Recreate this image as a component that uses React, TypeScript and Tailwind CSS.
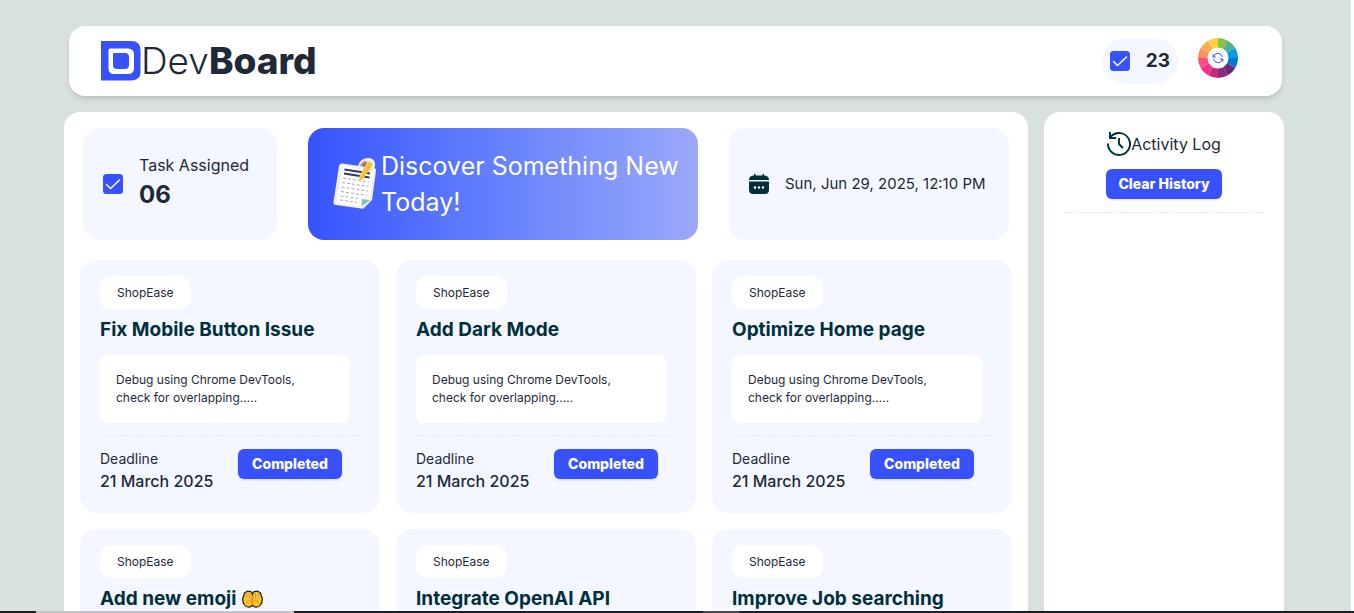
import React from "react";

const wheelColors = [
  "#8bc34a", "#4db296", "#039be5", "#0277cd", "#6a2a78", "#8e2a7c",
  "#c62b80", "#ff2e88", "#ff4f7e", "#ff8f5e", "#ffb04c", "#ffd23a",
];

function wedge(index: number) {
  const a = ((index * 30 - 90) * Math.PI) / 180;
  const b = (((index + 1) * 30 - 90) * Math.PI) / 180;
  return `M20 20L${20 + 20 * Math.cos(a)} ${20 + 20 * Math.sin(a)}A20 20 0 0 1 ${20 + 20 * Math.cos(b)} ${20 + 20 * Math.sin(b)}Z`;
}

function LogoIcon() {
  return (
    <svg className="size-10 shrink-0" viewBox="0 0 40 40" aria-hidden="true">
      <path d="M0 0H30Q39.500 0 39.500 9V31Q39.500 39.500 30 39.500H0Z" fill="#3752fd" />
      <path d="M9 7.500H27Q33 7.500 33 13.500V27Q33 33 27 33H13Q7.500 33 7.500 27V9Q7.500 7.500 9 7.500Z" fill="#fff" />
      <path d="M13 12H24Q28 12 28 16V24Q28 28 24 28H16Q12 28 12 24V13Q12 12 13 12Z" fill="#3752fd" />
    </svg>
  );
}

function CheckIcon() {
  return (
    <svg className="size-5 shrink-0" viewBox="0 0 20 20" aria-hidden="true">
      <rect width="20" height="20" rx="3.500" fill="#3752fd" />
      <path d="M3.500 10.500L7.500 14.500L16.500 6" fill="none" stroke="#fff" strokeWidth="1.500" strokeLinecap="round" strokeLinejoin="round" />
    </svg>
  );
}

function ColorWheel() {
  return (
    <svg className="size-10" viewBox="0 0 40 40" aria-hidden="true">
      {wheelColors.map((color, i) => (
        <path key={color} d={wedge(i)} fill={color} />
      ))}
      <circle cx="20" cy="20" r="10.500" fill="#fff" />
      <g fill="none" stroke="#3752fd" strokeWidth="1" strokeLinecap="round" strokeLinejoin="round">
        <path d="M24.300 18.500A4.500 4.500 0 0 0 16.200 17.500L15.200 19" />
        <path d="M15.200 16.500V19H17.500" />
        <path d="M15.700 21.500A4.500 4.500 0 0 0 23.800 22.500L24.800 21" />
        <path d="M24.800 23.500V21H22.500" />
      </g>
    </svg>
  );
}

function NotesIcon() {
  return (
    <svg className="h-[52px] w-12 shrink-0" viewBox="0 0 48 52" aria-hidden="true">
      <path d="M9 5.500L41 10Q43.500 10.500 43 13L39 42L31 50Q30 51 28 50.500L3 47Q0 46.500 .5 44L6 8Q6.500 5.200 9 5.500Z" fill="#f3eee0" />
      <path d="M9.500 7.500L41 12L37 41.500L29 48.500L3 45Z" fill="#fff" />
      <path d="M29 41L37 42L28.500 48.500Z" fill="#78c5c9" />
      <path d="M11.500 11.500L37 15.500M11 15.500L36.500 19.500" stroke="#33386b" strokeWidth="2" />
      <path d="M10 20L36 24M9 24.500L35.500 28.500M8.500 29L35 33M8 33.500L34 37.500M7.500 38L25 40.500M7 42L24 44.500" stroke="#a3a7ca" strokeWidth="1" strokeDasharray="3 2" />
      <path d="M27 9Q28 2.500 35 2Q41 2 40 8L38 14" fill="none" stroke="#f3eee0" strokeWidth="4" />
      <path d="M28 8Q30 3.500 33 4" fill="none" stroke="#e78345" strokeWidth="2" />
      <path d="M34 4Q37 2.500 39 5Q40 6.500 38.500 9L30 21L26 23.500L26.500 18Z" fill="#f8c743" />
      <path d="M38 6L28 21" stroke="#e8ac2d" strokeWidth="1" />
    </svg>
  );
}

function CalendarIcon() {
  return (
    <svg className="size-5 shrink-0" viewBox="0 0 20 20" aria-hidden="true">
      <path d="M5 0H6.500V1.500H13.500V0H15V1.500Q20 1.500 20 6H0Q0 1.500 5 1.500Z" fill="#00303c" />
      <path d="M0 7.500H20V15.500Q20 20 16 20H4Q0 20 0 15.500Z" fill="#00303c" />
      <circle cx="6" cy="13.500" r="1.200" fill="#fff" />
      <circle cx="10" cy="13.500" r="1.200" fill="#fff" />
      <circle cx="14" cy="13.500" r="1.200" fill="#fff" />
    </svg>
  );
}

function HistoryIcon() {
  return (
    <svg className="size-6 shrink-0" viewBox="0 0 24 24" fill="none" stroke="#00303c" strokeWidth="1.900" aria-hidden="true">
      <path d="M1 11.500A11 11 0 1 0 4.200 4.200L3 5.500" />
      <path d="M3 0V6H9" />
      <path d="M12 6V12L16 16" />
    </svg>
  );
}

function PalmsIcon() {
  return (
    <svg className="ml-1.5 inline-block h-[18px] w-[21px] align-[-3px]" viewBox="0 0 21 18" role="img" aria-label="Palms up together">
      <g fill="#fcc12f" stroke="#1c1a12" strokeWidth="1.200" strokeLinejoin="round">
        <path d="M10.500 4Q9.500 1 7.500 1.500Q5.500 .3 4.200 2Q2 2 2 5L.8 8Q.3 12 2.500 15Q4.500 17.500 8 17L10.500 15.500Z" />
        <path d="M10.500 4Q11.500 1 13.500 1.500Q15.500 .3 16.800 2Q19 2 19 5L20.200 8Q20.700 12 18.500 15Q16.500 17.500 13 17L10.500 15.500Z" />
      </g>
      <path d="M10.500 6V15" stroke="#fcc12f" strokeWidth="1.400" />
      <path d="M4.500 3V8M7.500 2.500V8M13.500 2.500V8M16.500 3V8M10.500 5V15M4 13.500Q4.500 10 8.500 10.500M17 13.500Q16.500 10 12.500 10.500" fill="none" stroke="#dd951c" strokeWidth=".8" />
    </svg>
  );
}

const tasks = [
  { title: "Fix Mobile Button Issue" },
  { title: "Add Dark Mode" },
  { title: "Optimize Home page" },
  { title: "Add new emoji", emoji: true },
  { title: "Integrate OpenAI API" },
  { title: "Improve Job searching" },
];

const buttonClass =
  "h-[30px] rounded-md bg-[#3752fd] text-sm font-extrabold text-white shadow-sm";

function TaskCard({ title, emoji }: { title: string; emoji?: boolean }) {
  return (
    <article className="rounded-2xl bg-[#f4f7ff] px-5 pt-4 pb-5">
      <span className="inline-block rounded-xl bg-white px-[17px] py-2 align-top text-xs leading-[17px]">ShopEase</span>
      <h2 className="mt-[7px] text-[19px] leading-7 font-bold whitespace-nowrap text-[#00303c]">
        {title}
        {emoji && <PalmsIcon />}
      </h2>
      <p className="mt-[11px] mr-2.5 rounded-lg bg-white p-4 text-xs leading-[18px]">
        Debug using Chrome DevTools,
        <br />
        check for overlapping.....
      </p>
      <hr className="mt-3 border-t border-dashed border-[#e1e5e9]" />
      <div className="mt-[13px] flex items-start justify-between pr-[18px]">
        <div>
          <p className="text-sm leading-5">Deadline</p>
          <p className="text-base leading-6 font-medium">21 March 2025</p>
        </div>
        <button type="button" className={`${buttonClass} w-[104px]`}>Completed</button>
      </div>
    </article>
  );
}

export default function App() {
  return (
    <div className="min-h-screen border-r-[3px] border-white bg-[#d8e1dc] py-[26px] font-['Inter','Noto_Sans',sans-serif] text-[#1f2937]">
      <div className="mr-[67px] ml-16">
        <header className="mr-0.5 ml-[5px] flex h-[70px] items-center justify-between rounded-2xl bg-white pr-11 pl-8 shadow-md">
          <h1 className="flex items-center text-[37px] leading-10">
            <LogoIcon />
            <span className="font-light">Dev</span>
            <span className="font-extrabold">Board</span>
          </h1>
          <div className="flex items-center gap-5">
            <div className="flex h-[46px] items-center gap-4 rounded-full bg-[#f4f7ff] px-2">
              <CheckIcon />
              <span className="text-[19px] font-bold">23</span>
            </div>
            <button type="button" aria-label="Change theme color" className="mb-1.5">
              <ColorWheel />
            </button>
          </div>
        </header>

        <div className="mt-4 grid grid-cols-[1fr_240px] gap-4">
          <main className="rounded-2xl bg-white p-4">
            <section className="mx-[3px] grid h-28 grid-cols-[minmax(0,194fr)_minmax(0,390fr)_minmax(0,280fr)] gap-[31px]">
              <div className="flex items-center gap-4 rounded-2xl bg-[#f4f7ff] px-5">
                <CheckIcon />
                <div className="whitespace-nowrap">
                  <p className="mb-0.5 text-base leading-6">Task Assigned</p>
                  <p className="mb-1 text-2xl leading-8 font-bold">06</p>
                </div>
              </div>
              <div className="flex items-center rounded-2xl bg-linear-to-r from-[#3752fd] to-[#9ca8f9] pl-[25px] text-[25px] leading-9 whitespace-nowrap text-white">
                <NotesIcon />
                <p>
                  Discover Something New
                  <br />
                  Today!
                </p>
              </div>
              <div className="flex items-center gap-4 rounded-2xl bg-[#f4f7ff] px-5 text-[15px] whitespace-nowrap">
                <CalendarIcon />
                <time dateTime="2025-06-29T12:10">Sun, Jun 29, 2025, 12:10 PM</time>
              </div>
            </section>
            <section className="mt-5 grid grid-cols-3 gap-4">
              {tasks.map((task) => (
                <TaskCard key={task.title} {...task} />
              ))}
            </section>
          </main>

          <aside className="rounded-2xl bg-white px-5 py-5 text-center">
            <h2 className="flex items-center justify-center text-base leading-6">
              <HistoryIcon />
              Activity Log
            </h2>
            <button type="button" className={`${buttonClass} mt-[13px] w-[116px]`}>Clear History</button>
            <hr className="mt-[13px] border-t border-dashed border-[#e1e5e9]" />
          </aside>
        </div>
      </div>
      <div className="fixed inset-x-0 bottom-0 flex h-0.5 bg-[#1d2027]">
        <span className="ml-9 w-[258px] bg-[#c4c4c6]" />
        <span className="ml-[409px] w-9 bg-[#4a4a50]" />
      </div>
    </div>
  );
}
